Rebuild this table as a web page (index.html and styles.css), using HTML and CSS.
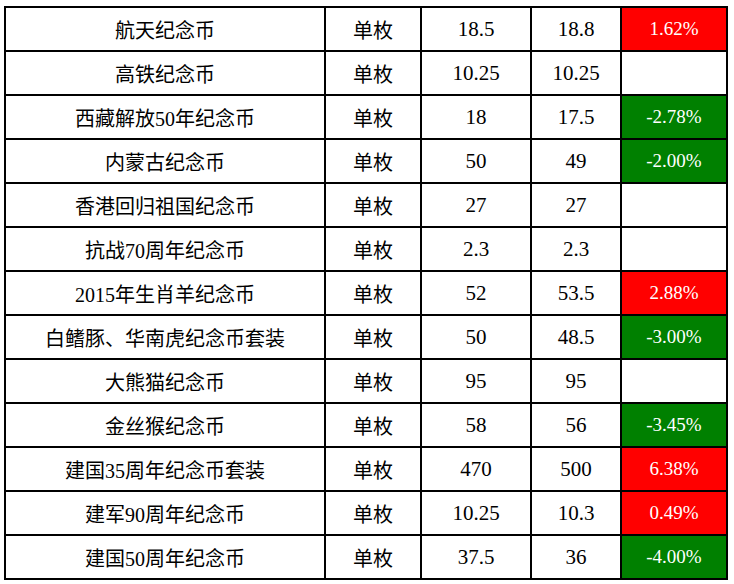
FILE: index.html
```
<!DOCTYPE html>
<html lang="zh">
<head>
<meta charset="utf-8">
<link rel="stylesheet" href="styles.css">
</head>
<body>
<div class="grid">
  <div class="c">航天纪念币</div><div class="c">单枚</div><div class="c n">18.5</div><div class="c n">18.8</div><div class="c p up">1.62%</div>
  <div class="c">高铁纪念币</div><div class="c">单枚</div><div class="c n">10.25</div><div class="c n">10.25</div><div class="c p"></div>
  <div class="c">西藏解放50年纪念币</div><div class="c">单枚</div><div class="c n">18</div><div class="c n">17.5</div><div class="c p down">-2.78%</div>
  <div class="c">内蒙古纪念币</div><div class="c">单枚</div><div class="c n">50</div><div class="c n">49</div><div class="c p down">-2.00%</div>
  <div class="c">香港回归祖国纪念币</div><div class="c">单枚</div><div class="c n">27</div><div class="c n">27</div><div class="c p"></div>
  <div class="c">抗战70周年纪念币</div><div class="c">单枚</div><div class="c n">2.3</div><div class="c n">2.3</div><div class="c p"></div>
  <div class="c">2015年生肖羊纪念币</div><div class="c">单枚</div><div class="c n">52</div><div class="c n">53.5</div><div class="c p up">2.88%</div>
  <div class="c">白鳍豚、华南虎纪念币套装</div><div class="c">单枚</div><div class="c n">50</div><div class="c n">48.5</div><div class="c p down">-3.00%</div>
  <div class="c">大熊猫纪念币</div><div class="c">单枚</div><div class="c n">95</div><div class="c n">95</div><div class="c p"></div>
  <div class="c">金丝猴纪念币</div><div class="c">单枚</div><div class="c n">58</div><div class="c n">56</div><div class="c p down">-3.45%</div>
  <div class="c">建国35周年纪念币套装</div><div class="c">单枚</div><div class="c n">470</div><div class="c n">500</div><div class="c p up">6.38%</div>
  <div class="c">建军90周年纪念币</div><div class="c">单枚</div><div class="c n">10.25</div><div class="c n">10.3</div><div class="c p up">0.49%</div>
  <div class="c">建国50周年纪念币</div><div class="c">单枚</div><div class="c n">37.5</div><div class="c n">36</div><div class="c p down">-4.00%</div>
</div>
</body>
</html>
```
FILE: styles.css
```
html, body {
  margin: 0;
  padding: 0;
  background: #ffffff;
}
body {
  padding: 6px 0 0 4px;
  font-family: "Liberation Serif", "Noto Sans CJK SC", serif;
  font-size: 20px;
  color: #000000;
}
.grid {
  display: grid;
  grid-template-columns: 320px 96px 110px 90px 106px;
  grid-auto-rows: 44px;
  width: 722px;
  border-left: 2px solid #000;
  border-top: 2px solid #000;
}
.c {
  box-sizing: border-box;
  border-right: 2px solid #000;
  border-bottom: 2px solid #000;
  display: flex;
  align-items: center;
  justify-content: center;
  white-space: nowrap;
}
.n {
  font-size: 21px;
}
.p {
  font-size: 19px;
}
.up {
  background: #ff0000;
  color: #ffffff;
}
.down {
  background: #008000;
  color: #ffffff;
}
```
